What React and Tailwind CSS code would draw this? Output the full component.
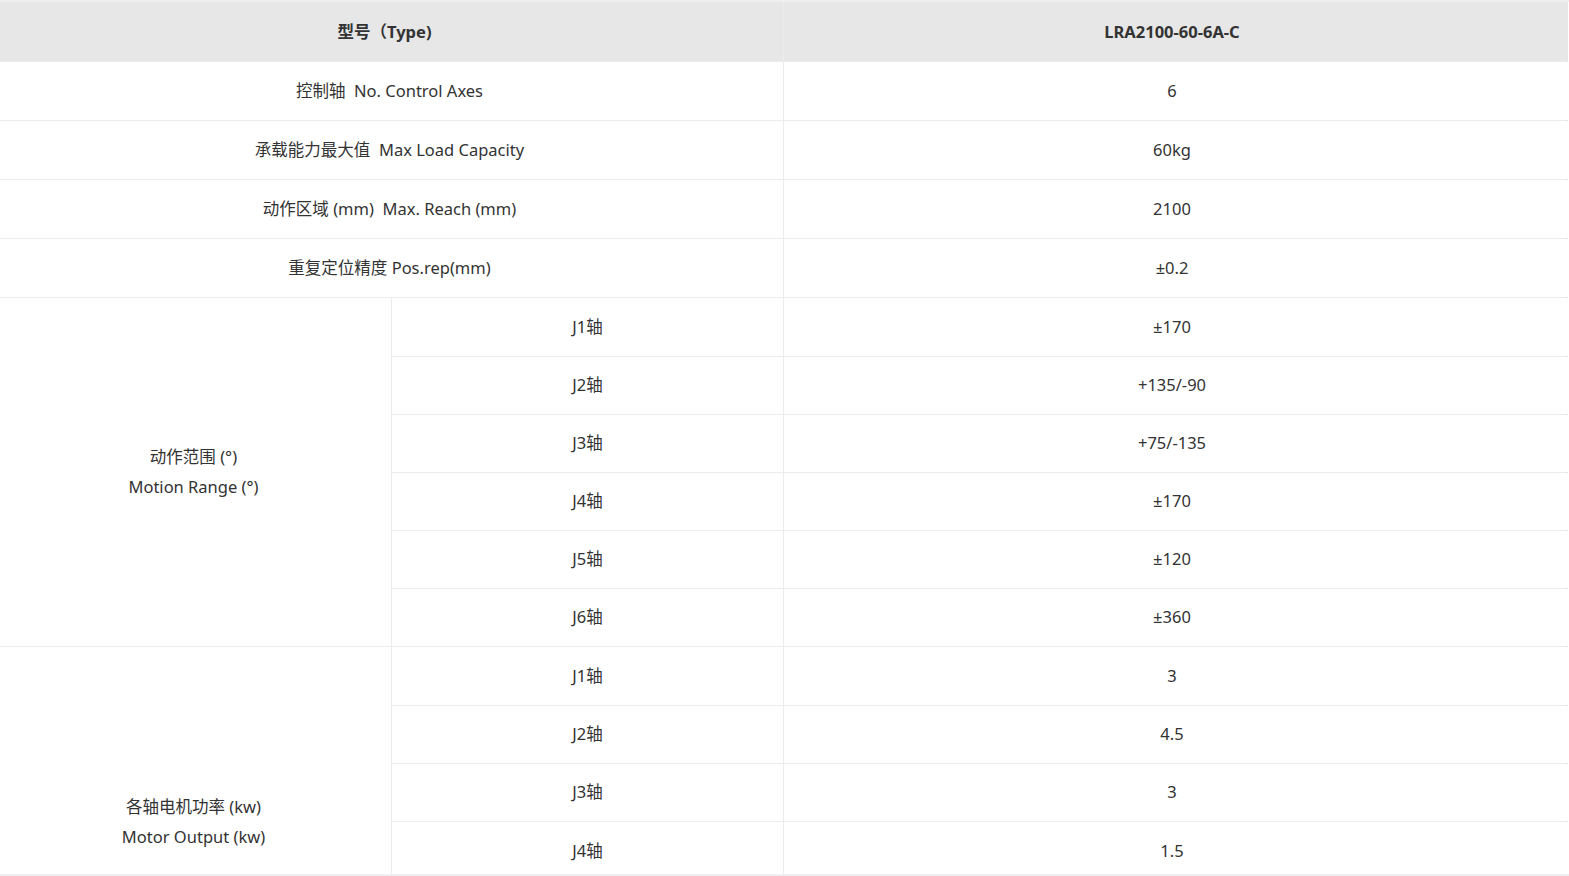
import React from "react";

const font = { fontFamily: '"Noto Sans", "Noto Sans CJK SC", sans-serif' };

function Cell({ children, className = "" }) {
  return (
    <div className={"bg-white flex items-center justify-center text-center text-[16.5px] text-[#333] " + className}>
      {children}
    </div>
  );
}

export default function App() {
  const motion = [
    ["J1轴", "±170"],
    ["J2轴", "+135/-90"],
    ["J3轴", "+75/-135"],
    ["J4轴", "±170"],
    ["J5轴", "±120"],
    ["J6轴", "±360"],
  ];
  const power = [
    ["J1轴", "3"],
    ["J2轴", "4.5"],
    ["J3轴", "3"],
    ["J4轴", "1.5"],
  ];
  return (
    <div className="w-[1569px] h-[876px] bg-white flex flex-col" style={font}>
      <div className="h-[874px] overflow-hidden">
        <div className="w-[1569px] border-t-2 border-[#efefef]">
          <div className="w-[1568px] border-r border-[#dedede]">
            <div
              className="grid grid-cols-[391px_391px_784px] gap-px bg-[#ececec]"
              style={{
                gridTemplateRows:
                  "59px 58px 58px 58px 58px 58px 57px 57px 57px 57px 57px 58px 57px 57px 60px",
              }}
            >
              <Cell className="col-span-2 font-bold !bg-[#e7e7e7] pr-[14px] pt-[2px]">型号（Type)</Cell>
              <Cell className="font-bold !bg-[#e7e7e7] pr-[8px] pt-[2px]">LRA2100-60-6A-C</Cell>

              <Cell className="col-span-2 pr-[4px]">控制轴&nbsp;&nbsp;No. Control Axes</Cell>
              <Cell className="pr-[8px]">6</Cell>
              <Cell className="col-span-2 pr-[4px]">承载能力最大值&nbsp;&nbsp;Max Load Capacity</Cell>
              <Cell className="pr-[8px]">60kg</Cell>
              <Cell className="col-span-2 pr-[4px]">动作区域 (mm)&nbsp;&nbsp;Max. Reach (mm)</Cell>
              <Cell className="pr-[8px]">2100</Cell>
              <Cell className="col-span-2 pr-[4px]">重复定位精度 Pos.rep(mm)</Cell>
              <Cell className="pr-[8px]">±0.2</Cell>

              <Cell className="row-span-6 flex-col leading-[30px] pr-[4px]">
                <div>动作范围 (°)</div>
                <div>Motion Range (°)</div>
              </Cell>
              {motion.map(([a, b]) => (
                <React.Fragment key={"m" + a}>
                  <Cell>{a}</Cell>
                  <Cell className="pr-[8px]">{b}</Cell>
                </React.Fragment>
              ))}

              <Cell className="row-span-4 flex-col !justify-end leading-[30px] pr-[4px] pb-[30px]">
                <div>各轴电机功率 (kw)</div>
                <div>Motor Output (kw)</div>
              </Cell>
              {power.map(([a, b], i) => (
                <React.Fragment key={"p" + a}>
                  <Cell className={i === 3 ? "!items-start pt-[17px]" : ""}>{a}</Cell>
                  <Cell className={"pr-[8px] " + (i === 3 ? "!items-start pt-[17px]" : "")}>{b}</Cell>
                </React.Fragment>
              ))}
            </div>
          </div>
        </div>
      </div>
      <div className="h-[2px] bg-[#efeff4]" />
    </div>
  );
}
